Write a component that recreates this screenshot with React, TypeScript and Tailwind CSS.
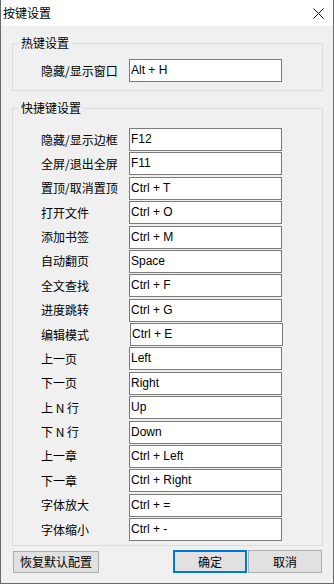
import React from 'react';

const cjk = "font-['Noto_Sans_CJK_SC','Microsoft_YaHei',sans-serif]";
const latin = "font-['Liberation_Sans','Noto_Sans_CJK_SC',sans-serif]";

type Row = { label: string; keys: string; shift?: boolean };

const rows: Row[] = [
  { label: '隐藏/显示边框', keys: 'F12' },
  { label: '全屏/退出全屏', keys: 'F11' },
  { label: '置顶/取消置顶', keys: 'Ctrl + T' },
  { label: '打开文件', keys: 'Ctrl + O' },
  { label: '添加书签', keys: 'Ctrl + M' },
  { label: '自动翻页', keys: 'Space' },
  { label: '全文查找', keys: 'Ctrl + F' },
  { label: '进度跳转', keys: 'Ctrl + G' },
  { label: '编辑模式', keys: 'Ctrl + E', shift: true },
  { label: '上一页', keys: 'Left' },
  { label: '下一页', keys: 'Right' },
  { label: '上 N 行', keys: 'Up' },
  { label: '下 N 行', keys: 'Down' },
  { label: '上一章', keys: 'Ctrl + Left' },
  { label: '下一章', keys: 'Ctrl + Right' },
  { label: '字体放大', keys: 'Ctrl + =' },
  { label: '字体缩小', keys: 'Ctrl + -' },
];

function KeyBox({ value, shift }: { value: string; shift?: boolean }) {
  return (
    <input
      readOnly
      value={value}
      className={
        'w-[153px] h-[23px] bg-white border border-[#7a7a7a] pl-[1px] pb-[1px] text-[12px] text-black outline-none ' +
        latin +
        (shift ? ' ml-[1px]' : '')
      }
    />
  );
}

export default function App() {
  return (
    <div className={'w-[334px] h-[584px] bg-[#f0f0f0] border-x border-b border-[#646a70] flex flex-col text-black ' + cjk}>
      {/* title bar */}
      <div className="h-[26px] bg-white flex items-center justify-between pl-[2px] pr-[9px] shrink-0">
        <span className="text-[12px] leading-[14px]">按键设置</span>
        <svg width="11" height="11" viewBox="0 0 11 11" className="mt-[1px]">
          <path d="M0.5 0.5 L10.5 10.5 M10.5 0.5 L0.5 10.5" stroke="#111" strokeWidth="1" fill="none" />
        </svg>
      </div>

      <div className="flex flex-col pl-[11px] pr-[10px]">
        {/* hotkey group */}
        <fieldset className="mt-[10px] h-[55px] border border-[#dcdcdc]">
          <legend className="ml-[6px] px-[2px] text-[12px] leading-[14px]">热键设置</legend>
          <div className="flex items-center pt-[9px]">
            <span className="w-[116px] pl-[28px] text-[12px] leading-[14px]">隐藏/显示窗口</span>
            <KeyBox value="Alt + H" />
          </div>
        </fieldset>

        {/* shortcut group */}
        <fieldset className="mt-[10px] h-[445px] border border-[#dcdcdc]">
          <legend className="ml-[6px] px-[2px] text-[12px] leading-[14px]">快捷键设置</legend>
          <div className="flex flex-col pt-[13px]">
            {rows.map((r) => (
              <div key={r.label} className="h-[24.375px] flex items-start">
                <div className="h-[23px] flex items-center">
                  <span className="w-[116px] pl-[28px] text-[12px] leading-[14px] whitespace-nowrap">{r.label}</span>
                  <KeyBox value={r.keys} shift={r.shift} />
                </div>
              </div>
            ))}
          </div>
        </fieldset>

        {/* buttons */}
        <div className="mt-[4px] flex items-center pl-[1px] pr-[1px]">
          <button className="w-[86px] h-[22px] bg-[#e1e1e1] border border-[#adadad] text-[12px] leading-[14px]">
            恢复默认配置
          </button>
          <div className="flex-1" />
          <button className="w-[74px] h-[23px] bg-[#e1e1e1] border-2 border-[#0078d7] text-[12px] leading-[14px]">
            确定
          </button>
          <button className="ml-[1px] w-[74px] h-[23px] bg-[#e1e1e1] border border-[#adadad] text-[12px] leading-[14px]">
            取消
          </button>
        </div>
      </div>
    </div>
  );
}
